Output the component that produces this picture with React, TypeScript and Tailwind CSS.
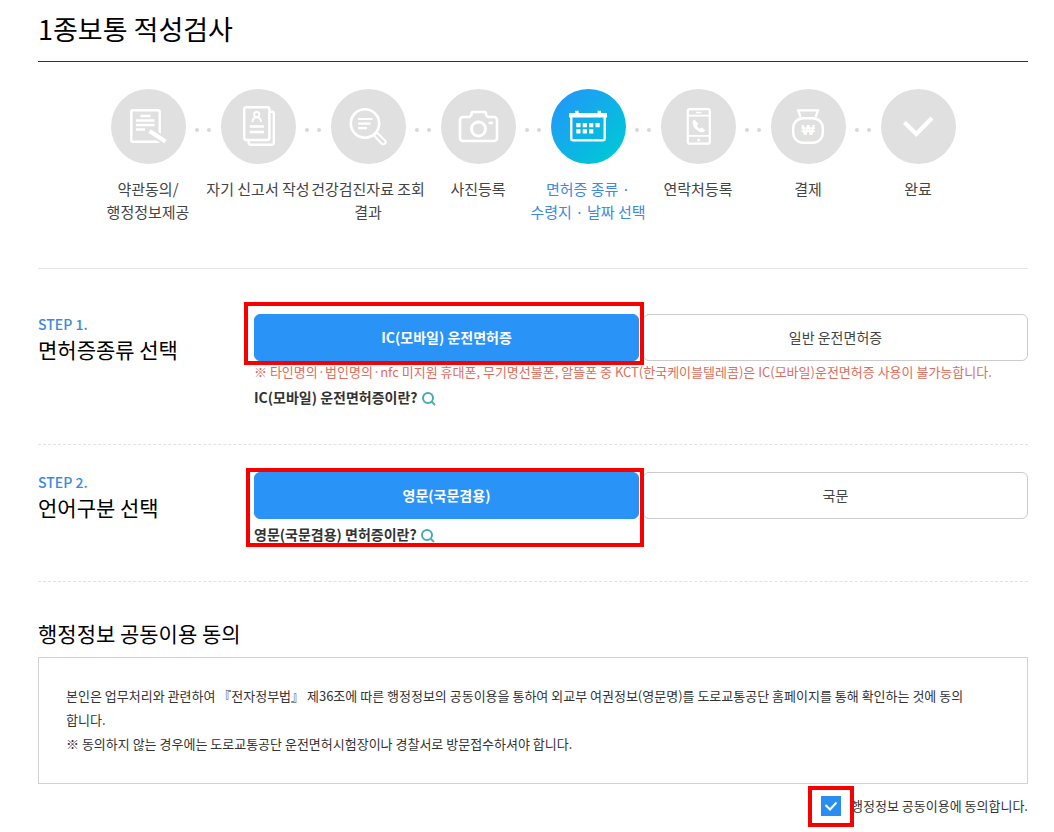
import { useState, type ReactNode } from "react";
import { clsx } from "clsx";

type Step = {
  lines: string[];
  icon: ReactNode;
  current?: boolean;
};

const steps: Step[] = [
  {
    lines: ["약관동의/", "행정정보제공"],
    icon: (
      <>
        <rect x="20.3" y="21.3" width="28.4" height="31.4" rx="1.5" strokeWidth="2.4" />
        <path d="M29.5 27H39.5M25 31.5H43.5M25 36H43.5M25 40.5H34" strokeWidth="2.3" />
        <path d="M37.5 41.3L54.5 52.5" stroke="#e0e0e0" strokeWidth="8" />
        <path d="M38.5 42L54.5 52.5" strokeWidth="4.2" />
      </>
    ),
  },
  {
    lines: ["자기 신고서 작성"],
    icon: (
      <>
        <rect x="23.2" y="18.2" width="25.2" height="32.8" rx="2" strokeWidth="2.5" />
        <path d="M49 22.7H51a1.8 1.8 0 0 1 1.8 1.8V54a1.8 1.8 0 0 1-1.8 1.8H29.5a1.8 1.8 0 0 1-1.8-1.8V52" strokeWidth="2.4" />
        <circle cx="35.7" cy="25.5" r="2.6" strokeWidth="1.9" />
        <path d="M31.3 33c.4-3 2-4.6 4.4-4.6s4 1.6 4.4 4.6" strokeWidth="1.9" />
        <path d="M28.7 37.5H43M28.7 43H43" strokeWidth="2.4" />
      </>
    ),
  },
  {
    lines: ["건강검진자료 조회", "결과"],
    icon: (
      <>
        <circle cx="34" cy="34.5" r="14.2" strokeWidth="2.6" />
        <path d="M27 30H41.5M27 34.6H39.5M27 39.2H36" strokeWidth="2.2" />
        <path d="M43 46.5l2.9-2.9 8 7.8a2.2 2.2 0 0 1-3.2 3.3z" strokeWidth="2" />
      </>
    ),
  },
  {
    lines: ["사진등록"],
    icon: (
      <>
        <path d="M22 28H28.5L30.5 26V24.5A1.5 1.5 0 0 1 32 23H43.5A1.5 1.5 0 0 1 45 24.5V26L47 28H53A3 3 0 0 1 56 31V49A3 3 0 0 1 53 52H22A3 3 0 0 1 19 49V31A3 3 0 0 1 22 28z" strokeWidth="2.6" />
        <circle cx="37.5" cy="40" r="7" strokeWidth="3" />
        <rect x="47.5" y="32.5" width="4.5" height="2.8" rx="1" fill="white" stroke="none" />
      </>
    ),
  },
  {
    lines: ["면허증 종류 ·", "수령지 · 날짜 선택"],
    current: true,
    icon: (
      <>
        <path d="M20.3 28V50A1.3 1.3 0 0 0 21.6 51.3H52.4A1.3 1.3 0 0 0 53.7 50V28" strokeWidth="2.3" />
        <path d="M18 24h38v4.5H18z" fill="white" stroke="none" />
        <path d="M26 21.8V27M48.3 21.8V27" strokeWidth="3.4" />
        <path d="M25.3 34h4.2v4.2h-4.2zM31.7 34h4.2v4.2h-4.2zM38.1 34h4.2v4.2h-4.2zM44.5 34h4.2v4.2h-4.2zM25.3 40.3h4.2v4.2h-4.2zM31.7 40.3h4.2v4.2h-4.2zM38.1 40.3h4.2v4.2h-4.2z" fill="white" stroke="none" />
      </>
    ),
  },
  {
    lines: ["연락처등록"],
    icon: (
      <>
        <rect x="26.8" y="20.2" width="22" height="34.5" rx="2" strokeWidth="2.2" />
        <path d="M27 26.7H49M27 46.8H49" strokeWidth="1.8" />
        <path d="M35 23.5H40.5" strokeWidth="1.5" />
        <circle cx="37.7" cy="51" r="1.5" fill="white" stroke="none" />
        <path d="M33.5 30.7c-1.4.7-2.2 1.9-1.9 3.7.8 4.2 4.7 8 8.9 8.8 1.8.2 2.8-.4 3.7-1.9l-3.4-2.9-2 1.4c-1.3-.6-2.3-1.7-2.9-3l1.3-2z" fill="white" stroke="none" />
      </>
    ),
  },
  {
    lines: ["결제"],
    icon: (
      <>
        <path d="M29.5 28L27.2 21.3H47L44.7 28" strokeWidth="2.3" />
        <rect x="22.2" y="29.2" width="29.6" height="24.6" rx="10" strokeWidth="2.4" />
        <text
          x="37"
          y="46"
          textAnchor="middle"
          fill="white"
          stroke="none"
          className="font-['Liberation_Sans',sans-serif] text-[14px] font-bold"
        >
          ₩
        </text>
      </>
    ),
  },
  {
    lines: ["완료"],
    icon: <path d="M23.5 33.5L35.3 45L51 29" strokeWidth="4.2" />,
  },
];

function StepItem({ step, first }: { step: Step; first: boolean }) {
  return (
    <li className="relative flex w-[110px] flex-col items-center" aria-current={step.current ? "step" : undefined}>
      {!first && (
        <span className="absolute -left-2 top-[39px] flex gap-2">
          <span className="size-1 rounded-full bg-[#d8d8d8]" />
          <span className="size-1 rounded-full bg-[#d8d8d8]" />
        </span>
      )}
      <span
        className={clsx(
          "size-[75px] rounded-full",
          step.current ? "bg-linear-to-br from-[#2492fb] to-[#02cdd0]" : "bg-[#e0e0e0]",
        )}
      >
        <svg viewBox="0 0 75 75" className="size-full" fill="none" stroke="white" aria-hidden="true">
          {step.icon}
        </svg>
      </span>
      <span
        className={clsx(
          "mt-[13px] whitespace-nowrap text-center text-[15px] leading-[23px]",
          step.current ? "text-[#3b8ae0]" : "text-[#444]",
        )}
      >
        {step.lines.map((line) => (
          <span key={line} className="block">
            {line}
          </span>
        ))}
      </span>
    </li>
  );
}

function Highlight({ className }: { className: string }) {
  return <span className={clsx("pointer-events-none absolute border-4 border-[#f90000]", className)} />;
}

function HelpLink({ children }: { children: ReactNode }) {
  return (
    <a href="#help" className="flex w-fit items-center gap-1 text-[14px] font-bold leading-6 text-[#333]">
      {children}
      <svg viewBox="0 0 14 14" className="mt-1 size-[14px]" fill="none" strokeWidth="2" aria-hidden="true">
        <circle cx="6" cy="6" r="5" stroke="#48a9b5" />
        <path d="M9.5 9.5L13 13" stroke="#55b58d" />
      </svg>
    </a>
  );
}

type ChoiceProps = {
  no: number;
  title: string;
  options: string[];
  notice?: string;
  help: string;
  highlight: string;
  className: string;
};

function ChoiceSection({ no, title, options, notice, help, highlight, className }: ChoiceProps) {
  const [selected, setSelected] = useState(options[0]);

  return (
    <section className={clsx("flex border-b border-dashed border-[#e2e2e2]", className)}>
      <div className="w-[216px] shrink-0">
        <p className="text-[14px] font-medium leading-5 text-[#3b8ae0]">STEP {no}.</p>
        <h2 className="text-[21px] leading-[30px] text-black">{title}</h2>
      </div>
      <div className="relative min-w-0 flex-1">
        <div className="grid grid-cols-2 gap-1">
          {options.map((option) => (
            <button
              key={option}
              type="button"
              aria-pressed={selected === option}
              onClick={() => setSelected(option)}
              className={clsx(
                "h-[47px] rounded-md border text-[14px]",
                selected === option
                  ? "border-[#2a93f8] bg-[#2a93f8] font-bold text-white"
                  : "border-[#ccc] bg-white text-[#444]",
              )}
            >
              {option}
            </button>
          ))}
        </div>
        {notice && <p className="text-[13px] leading-[22px] text-[#dc6e5c]">{notice}</p>}
        <div className={notice ? "pt-[2px]" : "pt-[3px]"}>
          <HelpLink>{help}</HelpLink>
        </div>
        <Highlight className={highlight} />
      </div>
    </section>
  );
}

export default function App() {
  const [agreed, setAgreed] = useState(true);

  return (
    <main className="bg-white pb-4 pl-[38px] pr-[26px] font-['Noto_Sans_CJK_KR',sans-serif] text-[#333]">
      <h1 className="border-b border-[#333] pb-3 pt-[9px] text-[27px] leading-10 text-black">1종보통 적성검사</h1>

      <ol className="flex h-[207px] justify-center border-b border-[#e5e5e5] pt-[27px]">
        {steps.map((step, i) => (
          <StepItem key={step.lines[0]} step={step} first={i === 0} />
        ))}
      </ol>

      <ChoiceSection
        no={1}
        title="면허증종류 선택"
        options={["IC(모바일) 운전면허증", "일반 운전면허증"]}
        notice="※ 타인명의·법인명의·nfc 미지원 휴대폰, 무기명선불폰, 알뜰폰 중 KCT(한국케이블텔레콤)은 IC(모바일)운전면허증 사용이 불가능합니다."
        help="IC(모바일) 운전면허증이란?"
        highlight="-left-[10px] -top-3 h-[63px] w-[calc(50%+13px)]"
        className="pb-[35px] pt-[45px]"
      />
      <ChoiceSection
        no={2}
        title="언어구분 선택"
        options={["영문(국문겸용)", "국문"]}
        help="영문(국문겸용) 면허증이란?"
        highlight="-left-2 -top-1 h-[79px] w-[calc(50%+11px)]"
        className="pb-[35px] pt-[27px]"
      />

      <section className="pt-9">
        <h2 className="text-[21px] leading-[30px] text-black">행정정보 공동이용 동의</h2>
        <div className="mt-[9px] border border-[#d3d3d3] px-[27px] pb-[27px] pt-[26px] text-[13px] leading-6">
          <p>
            본인은 업무처리와 관련하여 『전자정부법』 제36조에 따른 행정정보의 공동이용을 통하여 외교부
            여권정보(영문명)를 도로교통공단 홈페이지를 통해 확인하는 것에 동의
            <br />
            합니다.
          </p>
          <p>※ 동의하지 않는 경우에는 도로교통공단 운전면허시험장이나 경찰서로 방문접수하셔야 합니다.</p>
        </div>
        <div className="mt-3 flex justify-end">
          <label className="flex items-center gap-[10px] text-[13px] leading-5">
            <span className="relative size-5">
              <input
                type="checkbox"
                checked={agreed}
                onChange={(e) => setAgreed(e.target.checked)}
                className="block size-5 appearance-none border border-[#ccc] checked:border-[#2a8df0] checked:bg-[#2a8df0]"
              />
              {agreed && (
                <svg viewBox="0 0 20 20" className="pointer-events-none absolute inset-0 size-5" fill="none" aria-hidden="true">
                  <path d="M4.5 9L9 13.5L15.5 6.5" stroke="white" strokeWidth="2" />
                </svg>
              )}
              <Highlight className="-left-[13px] -top-[10px] h-[41px] w-[46px]" />
            </span>
            행정정보 공동이용에 동의합니다.
          </label>
        </div>
      </section>
    </main>
  );
}
